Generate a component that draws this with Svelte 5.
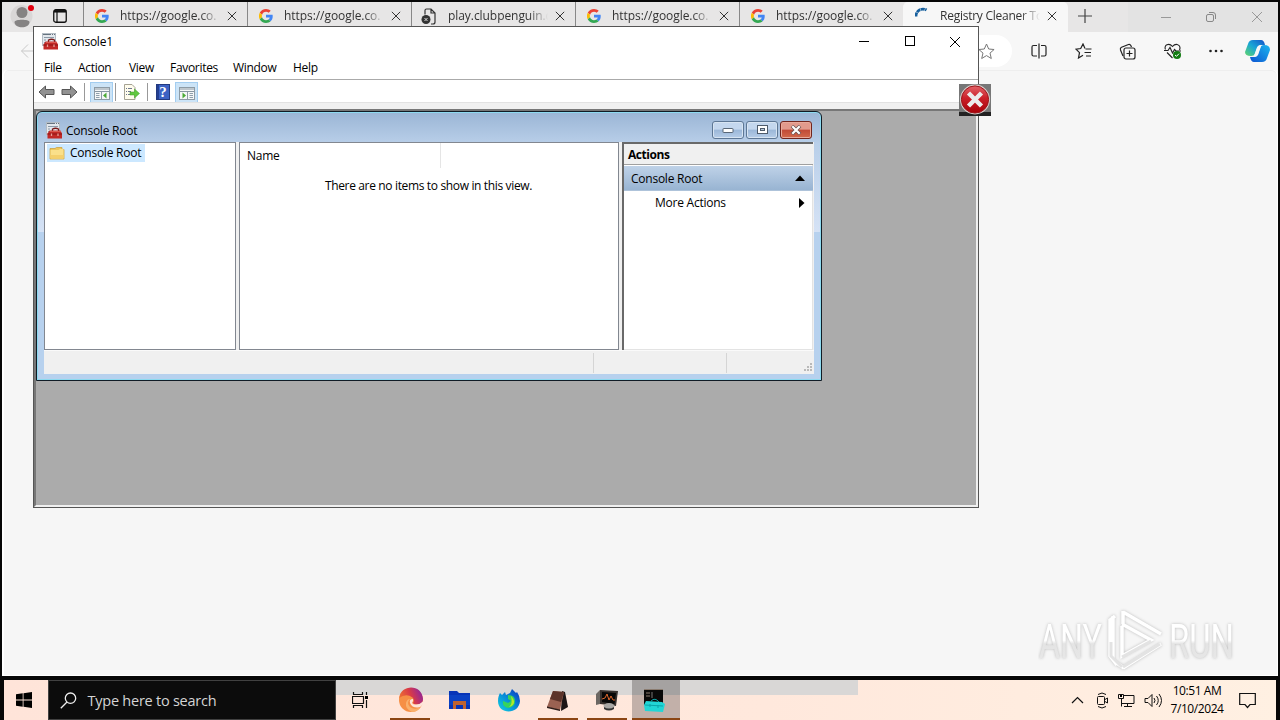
<script>
  const tabs = [
    { kind: 'google', label: 'https://google.co.' },
    { kind: 'google', label: 'https://google.co.' },
    { kind: 'page', label: 'play.clubpenguin.c' },
    { kind: 'google', label: 'https://google.co.' },
    { kind: 'google', label: 'https://google.co.' },
    { kind: 'loading', label: 'Registry Cleaner To' },
  ];
  const menus = [['File', 34], ['Action', 51], ['View', 41], ['Favorites', 63], ['Window', 60], ['Help', 40]];
  const dots = [[6, 0], [3, 3], [6, 3], [0, 6], [3, 6], [6, 6]];
</script>

{#snippet google()}
  <svg width="14" height="14" viewBox="0 0 48 48">
    <path fill="#ea4335" d="M24 9.5c3.5 0 6.700 1.200 9.200 3.600l6.900-6.900C35.900 2.400 30.500 0 24 0 14.600 0 6.500 5.400 2.600 13.200l8 6.200C12.400 13.700 17.700 9.500 24 9.500z" />
    <path fill="#4285f4" d="M47 24.600c0-1.600-.2-3.100-.4-4.600H24v9h12.900c-.6 3-2.200 5.500-4.700 7.200l7.700 6C44.400 38 47 31.800 47 24.600z" />
    <path fill="#fbbc05" d="M10.500 28.600A14 14 0 0 1 10.500 19.400l-8-6.200a24 24 0 0 0 0 21.600z" />
    <path fill="#34a853" d="M24 48c6.500 0 12-2.100 15.900-5.800l-7.700-6c-2.200 1.500-4.900 2.300-8.200 2.300-6.300 0-11.600-4.200-13.500-9.900l-8 6.200C6.500 42.600 14.600 48 24 48z" />
  </svg>
{/snippet}

{#snippet toolbox()}
  <svg width="17" height="17" viewBox="0 0 17 17">
    <rect x=".5" y=".5" width="13" height="12" fill="#e3e8ed" stroke="#b3bcc4" />
    <path d="M1 1.500h12" stroke="#66737f" stroke-dasharray="8 1 1 1" />
    <path d="M2 4.500h10M2 7h2M2 9.500h1" stroke="#8a9aa8" />
    <path d="M6.500 9V7q3-1.500 6 0v2" fill="none" stroke="#7c1b1b" stroke-width="1.300" />
    <path d="M3.500 8.500h11l1.500 3V16.500H1.500v-5z" fill="#c22927" />
    <path d="M1.500 12h14.500" stroke="#8c1515" />
    <path d="M4 9.500h11" stroke="#dc5850" />
    <path d="M5.500 11.500v2.500M12 11.500v2.500" stroke="#e89c94" stroke-width="1.300" />
  </svg>
{/snippet}

{#snippet cross(size, color, w = 1)}
  <svg width={size} height={size} viewBox="0 0 12 12"><path d="M1 1l10 10M11 1L1 11" fill="none" stroke={color} stroke-width={w} /></svg>
{/snippet}

{#snippet panelIcon(flip)}
  <svg width="16" height="13" viewBox="0 0 16 13" class:flip>
    <rect x=".5" y=".5" width="15" height="12" fill="#f5f7f8" stroke="#8d9ba6" />
    <path d="M1 2h14M1 4.500h14" stroke="#8796a2" />
    <path d="M7.500 5v7.500" stroke="#8d9ba6" />
    <path d="M2 6.500h3.500M2 8.500h3.500M2 10.500h3.500" stroke="#8f9fac" />
    <path d="M12.500 5.500v6L9 8.500z" fill="#4aaa35" />
  </svg>
{/snippet}

<div class="screen">
  <header class="strip">
    <div class="profile">
      <svg width="32" height="29" viewBox="0 0 32 29">
        <circle cx="19.500" cy="14" r="11" fill="#d9d7d7" />
        <circle cx="20" cy="10.500" r="5.500" fill="#858383" />
        <path d="M12.500 20c0-3 15-3 15 0 0 7-15 7-15 0z" fill="#858383" />
        <circle cx="29" cy="6" r="3" fill="#e3000f" />
      </svg>
    </div>
    <div class="tabmenu">
      <svg width="14" height="14" viewBox="0 0 14 14"><rect x=".75" y=".75" width="12.500" height="12.500" rx="2" fill="none" stroke="#111" stroke-width="1.300" /><path d="M1 2.300h12" stroke="#111" stroke-width="2.500" /><path d="M4 3v10" stroke="#111" stroke-width="1.200" /></svg>
    </div>
    {#each tabs as tab}
      <div class="tab" class:active={tab.kind === 'loading'}>
        <span class="favicon">
          {#if tab.kind === 'google'}{@render google()}
          {:else if tab.kind === 'page'}
            <svg class="pageicon" width="16" height="17" viewBox="0 0 16 17"><path d="M4 6.500V2.500q0-1.500 1.500-1.500h4.500l4 4v9q0 2-2 2H10M10 1v4h4" fill="none" stroke="#333" stroke-width="1.200" /><circle cx="5" cy="11.500" r="4.500" fill="#333" /><path d="M3.500 10l3 3m0-3l-3 3" stroke="#ddd" /></svg>
          {:else}
            <svg width="16" height="16" viewBox="0 0 16 16"><path d="M1 9.500A7 7 0 0 1 11.500 3" fill="none" stroke="#17609e" stroke-width="2.800" stroke-dasharray="4 .5" /></svg>
          {/if}
        </span>
        <span class="label">{tab.label}</span>
        <span class="x">{@render cross(10, '#333', 1.2)}</span>
      </div>
    {/each}
    <div class="newtab"><svg width="14" height="14" viewBox="0 0 14 14"><path d="M7 0v14M0 7h14" stroke="#444" stroke-width="1.200" /></svg></div>
    <div class="caption">
      <svg width="10" height="10" viewBox="0 0 10 10"><path d="M0 5.500h10" stroke="#999" /></svg>
      <svg width="10" height="10" viewBox="0 0 10 10"><rect x=".5" y="2.500" width="7" height="7" rx="1.500" fill="none" stroke="#888" /><path d="M3 .5h4q2.500 0 2.500 2.500v4" fill="none" stroke="#888" /></svg>
      {@render cross(12, '#999', 1)}
    </div>
  </header>

  <div class="addressbar">
    <svg class="back" width="16" height="16" viewBox="0 0 16 16"><path d="M15 8H1.500M8 1.500L1.500 8 8 14.500" fill="none" stroke="#c9c9c9" /></svg>
    <div class="address"><svg width="17" height="17" viewBox="0 0 17 17"><path d="M8.500 1l2.200 5 5.400.5-4.100 3.600 1.300 5.400-4.800-2.900-4.800 2.900L5 10.100.9 6.500 6.300 6z" fill="none" stroke="#777" /></svg></div>
    <div class="tools">
      <svg width="16" height="16" viewBox="0 0 16 16"><path d="M6 2.500H2.500q-1.500 0-1.500 1.500v7.500q0 1.500 1.500 1.500H6M8 .5v15M10 2.500h3.500q1.500 0 1.500 1.500v7.500q0 1.500-1.500 1.500H10" fill="none" stroke="#222" stroke-width="1.200" /></svg>
      <svg width="17" height="16" viewBox="0 0 17 16"><path d="M10 5.500L8 1 5.700 5.500 1 6.200l3.500 3.500L3.500 15 8 12.300M10.500 6h6M9.500 9.500h6.500M11 13h5" fill="none" stroke="#222" stroke-width="1.200" /></svg>
      <svg width="17" height="17" viewBox="0 0 17 17"><path d="M4 13L1.500 7q-.6-2 1-2.700L9.500 1.500q1.500-.6 2.300 1L12.500 4" fill="none" stroke="#222" stroke-width="1.200" /><rect x="5" y="5" width="11" height="11" rx="2" fill="none" stroke="#222" stroke-width="1.200" /><path d="M10.500 7.500v6M7.500 10.500h6" stroke="#222" stroke-width="1.200" /></svg>
      <svg width="18" height="17" viewBox="0 0 18 17"><path d="M1.500 6.500C-.5 2 5-.5 8.500 3.500 12-.5 17.500 2 15.500 7M0 7.500h4l2-3 2.500 5.500 2-3.500 1.500 1.500h5M3 9.500l5.500 5.500" fill="none" stroke="#222" stroke-width="1.100" /><circle cx="13" cy="12" r="4" fill="#137c13" /><path d="M11 12l1.500 1.300 2.500-2.600" fill="none" stroke="#fff" /></svg>
      <svg width="14" height="16" viewBox="0 0 14 16"><g fill="#222"><circle cx="1.500" cy="8" r="1.300" /><circle cx="7" cy="8" r="1.300" /><circle cx="12.500" cy="8" r="1.300" /></g></svg>
    </div>
    <svg class="copilot" width="25" height="24" viewBox="0 0 25 24">
      <defs>
        <linearGradient id="cpa" x1="0" y1="1" x2="1" y2="0"><stop offset="0" stop-color="#62d66b" /><stop offset=".5" stop-color="#18a5d6" /><stop offset="1" stop-color="#1652c9" /></linearGradient>
        <linearGradient id="cpb" x1="0" y1="1" x2="1" y2="0"><stop offset="0" stop-color="#0d54d1" /><stop offset="1" stop-color="#1cb6ef" /></linearGradient>
      </defs>
      <path d="M8 1h8q3 0 4 5h-4q-3 0-4 3l-2 6q-1 2-4 2-6 0-6-4L3 5q1-4 5-4z" fill="url(#cpa)" />
      <path d="M17 23H9q-3 0-4-5h4q3 0 4-3l2-6q1-3 4-3 6 0 6 5l-3 8q-1 4-5 4z" fill="url(#cpb)" />
      <path d="M12 8.500q1-2.500 4.500-2.500l-3.500 10q-1 2-4.500 2z" fill="#f7f7f7" />
    </svg>
  </div>
  <main class="page"></main>

  <svg class="watermark" width="212" height="64" viewBox="0 0 212 64">
    <defs><linearGradient id="wm" x1="0" y1="0" x2="0" y2="1"><stop offset="0" stop-color="#fff" /><stop offset=".48" stop-color="#fff" /><stop offset=".54" stop-color="#e4e4e4" /><stop offset="1" stop-color="#e9e9e9" /></linearGradient></defs>
    <g class="mark" font-family="Roboto, sans-serif" font-size="48" fill="url(#wm)">
      <text x="1" y="50" textLength="63" lengthAdjust="spacingAndGlyphs">ANY</text>
      <text x="131" y="50" textLength="65" lengthAdjust="spacingAndGlyphs">RUN</text>
    </g>
    <path class="mark" d="M75 8v43M84 18v30l29-16-29-16M85 4l38 22M85 60l38-24M77 54l9 6M85 3v13M77 8l-5 4v36l7 9" fill="none" stroke="#fff" stroke-width="3.500" />
    <path d="M84 49l29-16M85 59l37-23M73 34v14l11 11" fill="none" stroke="#e3e3e3" stroke-width="3" />
  </svg>

  <section class="console">
    <div class="titlebar">
      {@render toolbox()}<span class="title">Console1</span>
      <div class="winbtns">
        <svg width="12" height="12" viewBox="0 0 12 12"><path d="M1 5.500h10" stroke="#000" /></svg>
        <svg width="12" height="12" viewBox="0 0 12 12"><rect x="1.500" y=".5" width="9" height="9" fill="none" stroke="#000" /></svg>
        {@render cross(12, '#000', 1)}
      </div>
    </div>
    <nav>{#each menus as [m, w]}<span style="width:{w}px">{m}</span>{/each}</nav>
    <div class="toolbar">
      <svg class="arrow" width="17" height="14" viewBox="0 0 17 14"><path d="M1 7l6.500-6v3.500H16v5H7.500V13z" fill="#929292" stroke="#555" /></svg>
      <svg class="arrow flip" width="17" height="14" viewBox="0 0 17 14"><path d="M1 7l6.500-6v3.500H16v5H7.500V13z" fill="#929292" stroke="#555" /></svg>
      <i></i>
      <span class="pressed">{@render panelIcon(false)}</span>
      <i class="second"></i>
      <svg class="export" width="17" height="16" viewBox="0 0 17 16"><path d="M1.500.5H9l3 3v12H1.500z" fill="#fffced" stroke="#a5a293" /><path d="M3 4.500h1M5 4.500h4M3 7.500h1M5 7.500h3M3 10.500h1M5 10.500h3" stroke="#6e7890" /><path d="M7 8h4.500V5l5 4.500-5 4.500v-3H7z" fill="#62c840" stroke="#3c9f25" stroke-width=".5" /></svg>
      <i class="third"></i>
      <span class="help">?</span>
      <span class="pressed">{@render panelIcon(true)}</span>
    </div>
    <div class="gap"></div>
    <div class="mdi">
      <div class="child">
        <div class="childtitle">
          {@render toolbox()}<span class="title">Console Root</span>
          <div class="aerobtns">
            <span><svg width="12" height="8" viewBox="0 0 12 8"><rect x="1" y="2.500" width="10" height="4" rx=".5" fill="#fff" stroke="#596777" /></svg></span>
            <span><svg width="11" height="10" viewBox="0 0 11 10"><rect x=".5" y=".5" width="10" height="8" fill="#fff" stroke="#4e5b6b" /><rect x="3.500" y="3.500" width="4" height="2" fill="#b9c9db" stroke="#4e5b6b" /></svg></span>
            <span class="close"><svg width="12" height="10" viewBox="0 0 12 10"><path d="M2 1l8 8M10 1L2 9" stroke="#65504f" stroke-width="3.600" /><path d="M2.300 1.300l7.400 7.400M9.700 1.300L2.300 8.700" stroke="#fff" stroke-width="2.200" /></svg></span>
          </div>
        </div>
        <div class="body">
          <div class="tree"><div class="node">
            <svg width="16" height="14" viewBox="0 0 16 14"><path d="M1 2.500h5l1.500-1H13v2h2v9.500H1z" fill="#efc95c" stroke="#c99b37" stroke-width=".7" /><path d="M1.500 4h8L11 3h3.500v9.500h-13z" fill="#fae08a" /><path d="M1.500 9h13v3.500h-13z" fill="#f4d06d" /></svg>
            <span>Console Root</span>
          </div></div>
          <div class="list"><div class="cols"><span>Name</span></div><p>There are no items to show in this view.</p></div>
          <aside>
            <h2>Actions</h2>
            <div class="group"><span>Console Root</span><svg width="10" height="6" viewBox="0 0 10 6"><path d="M5 .5L10 6H0z" /></svg></div>
            <div class="more"><span>More Actions</span><svg width="6" height="10" viewBox="0 0 6 10"><path d="M0 0l5.500 5L0 10z" /></svg></div>
          </aside>
        </div>
        <footer><span></span><span></span><svg width="9" height="9" viewBox="0 0 9 9">{#each dots as [x, y]}<rect {x} {y} width="2" height="2" fill="#b9b9b9" />{/each}</svg></footer>
      </div>
    </div>
  </section>

  <svg class="error" width="32" height="32" viewBox="0 0 32 32">
    <defs><linearGradient id="err" x1="0" y1="0" x2="0" y2="1"><stop offset="0" stop-color="#e26368" /><stop offset=".45" stop-color="#cb2029" /><stop offset="1" stop-color="#a80008" /></linearGradient></defs>
    <path d="M0 0h32v28H0z" fill="#777" /><path d="M0 28h32v4H0z" fill="#222" />
    <circle cx="16" cy="15.500" r="15" fill="#d8cfcc" /><circle cx="16" cy="15.500" r="13.600" fill="url(#err)" stroke="#9b1419" />
    <path d="M9.500 9l13 13M22.500 9l-13 13" stroke="#ececec" stroke-width="4.500" />
  </svg>

  <div class="taskbar">
    <div class="start"><svg width="16" height="16" viewBox="0 0 16 16"><path d="M0 2.300L6.700 1.300v6.200H0zM7.500 1.200L16 0v7.500H7.500zM0 8.400h6.700v6.300L0 13.700zM7.500 8.400H16V16l-8.500-1.200z" /></svg></div>
    <div class="search"><svg width="17" height="17" viewBox="0 0 17 17"><circle cx="10.500" cy="6.200" r="5.200" fill="none" stroke="#eee" stroke-width="1.300" /><path d="M7 10L.8 16.200" stroke="#eee" stroke-width="1.300" /></svg><span>Type here to search</span></div>
    <div class="apps">
      <div class="app"><svg width="17" height="16" viewBox="0 0 17 16"><path d="M1.500 0v2.500h9V0M1.500 16v-2.500h9V16M.5 4.500h11v7H.5zM14.500 0v3M14.500 8v8" fill="none" stroke="#111" stroke-width="1.200" /><path d="M13 4h3v3h-3z" /></svg></div>
      <div class="app run">
        <svg width="26" height="26" viewBox="0 0 26 26"><defs><linearGradient id="edge" x1="0" y1=".6" x2="1" y2=".3"><stop offset="0" stop-color="#ef7430" /><stop offset=".5" stop-color="#d93a48" /><stop offset="1" stop-color="#8d249f" /></linearGradient></defs>
          <circle cx="13" cy="13" r="12" fill="#f68f45" /><path d="M1.200 11C3-3 24-3 25 12q0 5.500-6 5.500-3 0-4-1.500 2-3-.5-5.500Q8 6 1.200 11z" fill="url(#edge)" /><path d="M12 12q-4 4 0 8 4 3 10.500.5Q19 25 14 25 7 22 8 16q1-4 4-4z" fill="#f9b06c" /><path d="M15 12q-4 0-3 4 2 5 8 4.500 3-.5 5-3v-3q-3 3-7 3-3 0-4-1.500 1.500-1.500 1-4z" fill="#fee5da" /></svg></div>
      <div class="app"><svg width="22" height="20" viewBox="0 0 22 20"><path d="M0 1h8l2 2h11v16H0z" fill="#0634b8" /><path d="M0 5h21v10H0z" fill="#0a41c4" /><path d="M4 11h13v8h-3v-4H7v4H4z" fill="#bf6331" /></svg></div>
      <div class="app"><svg width="24" height="24" viewBox="0 0 24 24"><defs><linearGradient id="fox" x1="0" y1="1" x2="1" y2="0"><stop offset="0" stop-color="#13d5e0" /><stop offset=".5" stop-color="#088bd7" /><stop offset="1" stop-color="#0732bd" /></linearGradient></defs><path d="M3 5l2 2 3-3 1 3 4-2 2-4 4 4 1-1q3 4 3 9c-1 14-22 14-22 0 0-4 1-6 2-8z" fill="url(#fox)" /><path d="M11 7q7 0 7 6t-7 7q-6-1-5-7l5 2 3-2-3-2z" fill="#36d35d" /><path d="M14 8q7 8-2 11 4-3 2-11z" fill="#b4e929" /></svg></div>
      <div class="app run"><svg width="24" height="23" viewBox="0 0 24 23"><path d="M17 2l3 1 3 15-7 4z" fill="#1e1717" /><path d="M8 2l11 1-4 18-13-3z" fill="#9a6252" /><path d="M8 2l11 1-3 10-11-3z" fill="#5c342a" /><path d="M2 17.500l13 3V22L2 19z" fill="#2c1c18" /></svg></div>
      <div class="app run"><svg width="24" height="22" viewBox="0 0 24 22"><path d="M1 5l4-4v14l-4 1z" fill="#6c6763" /><path d="M5 1l18 1-2 15-16-2z" fill="#38322f" /><path d="M7 3l14 1-1.500 11L7 13z" fill="#080808" /><path d="M7 10l3-1 2-4 2 6 2-4 2 4h2" fill="none" stroke="#e1682d" /><ellipse cx="14" cy="17" rx="5.500" ry="3" fill="#aaa8a5" /><path d="M9 18q5 3 10 0v2q-5 3-10 0z" fill="#333" /></svg></div>
      <div class="app run selected"><svg width="23" height="24" viewBox="0 0 23 24"><path d="M1 1h19v16H1z" fill="#090909" /><path d="M1 1.500h19" stroke="#8b7c70" /><path d="M3 5h4M3 8h4" stroke="#8b7c70" /><path d="M9 4v6" stroke="#777" /><path d="M3 13l16 1 3 2-2 8-18-1-1-6z" fill="#21d6d6" /><path d="M8 13q4-4 8 1M2 17l18 1M7 16v3M15 17v3" fill="none" stroke="#0ba5aa" /></svg></div>
    </div>
    <div class="tray">
      <svg width="13" height="8" viewBox="0 0 13 8"><path d="M1 7l5.500-5.500L12 7" fill="none" stroke="#111" stroke-width="1.200" /></svg>
      <svg class="meet" width="13" height="17" viewBox="0 0 13 17"><path d="M2 2.500q4-3 8 0M2 14.500q4 3 8 0" fill="none" stroke="#111" /><rect x="1.500" y="4.500" width="7" height="8" rx="1" fill="none" stroke="#111" /><path d="M9 7.500l2.500-1.500v5L9 9.500" fill="none" stroke="#111" /></svg>
      <svg width="17" height="15" viewBox="0 0 17 15"><path d="M5 2.500h11v8H3.500V6M9.500 10.500v3M6 13.500h8M.5 1.500h5v4h-5zM3.500 5.500v8" fill="none" stroke="#111" /><path d="M2 2h2v2H2z" /></svg>
      <svg width="18" height="15" viewBox="0 0 18 15"><path d="M1 5.500h3l4-4v12l-4-4H1zM10 5q2 2.500 0 5M12.500 3q3.500 4.500 0 9M15 1q5 6.500 0 13" fill="none" stroke="#111" /></svg>
      <div class="clock"><span>10:51 AM</span><span>7/10/2024</span></div>
      <svg width="17" height="17" viewBox="0 0 17 17"><path d="M.7 1.500h15.600v11H11l-2.500 3-2.500-3H.7z" fill="none" stroke="#111" stroke-width="1.200" /></svg>
    </div>
  </div>
</div>

<style>
  :global(body) { margin: 0; overflow: hidden; }
  .screen { position: relative; box-sizing: border-box; width: 1280px; height: 720px; background: #070707; padding-top: 2px; overflow: hidden; font-family: "Open Sans", "Noto Sans", sans-serif; font-size: 12px; letter-spacing: -.24px; color: #000; display: flex; flex-direction: column; }
  .screen * { box-sizing: border-box; }
  svg { display: block; flex: none; }
  .flip { transform: scaleX(-1); }
  .strip { height: 30px; margin: 0 2px; display: flex; background: #e7e6e6; flex: none; }
  .profile { width: 40px; }
  .tabmenu { width: 41px; padding: 7px 0 0 11px; }
  .tab { width: 164px; display: flex; align-items: flex-start; border-left: 1px solid #888; padding: 0 0 0 11px; color: #333; }
  .favicon { width: 25px; padding-top: 7px; }
  .pageicon { margin-left: -2px; margin-top: -1px; }
  .label { width: 101px; line-height: 28px; white-space: nowrap; letter-spacing: -.06px; -webkit-mask-image: linear-gradient(90deg, #000 80%, transparent 99%); mask-image: linear-gradient(90deg, #000 80%, transparent 99%); }
  .x { padding: 9px 0 0 6px; }
  .tab.active { width: 165px; background: #f7f7f7; border-color: #f7f7f7; border-radius: 5px 5px 0 0; }
  .active .favicon { padding-top: 5px; }
  .active .label { letter-spacing: -.25px; }
  .newtab { width: 60px; padding: 7px 0 0 10px; }
  .caption { flex: 1; display: flex; justify-content: flex-end; align-items: center; gap: 35px; padding-right: 15px; background: #e3e3e3; }
  .addressbar { height: 38px; flex: none; margin: 0 2px; background: #f7f7f7; display: flex; align-items: center; box-shadow: 0 8px #f7f7f7; }
  .back { margin-left: 18px; }
  .address { width: 975px; margin-left: 1px; height: 32px; border-radius: 16px; background: #fff; display: flex; align-items: center; justify-content: flex-end; padding-right: 17px; }
  .tools { display: flex; align-items: center; width: 192px; margin-left: 19px; justify-content: space-between; }
  .copilot { margin-left: 22px; }
  .page { position: relative; height: 606px; margin: 0 2px 4px; flex: none; background: #f6f6f6; border: solid #fff; border-width: 0 1px 1px 2px; box-shadow: inset 0 1px #eee; border-radius: 6px 6px 0 0; }
  .watermark { position: absolute; left: 1038px; top: 608px; letter-spacing: 0; }
  .mark { filter: drop-shadow(0 0 1.500px #bbb); }
  .console { position: absolute; left: 33px; top: 26px; width: 946px; height: 482px; border: 1px solid #555; background: #fff; display: flex; flex-direction: column; }
  .titlebar { height: 29px; display: flex; align-items: center; padding-left: 8px; flex: none; }
  .title { margin-left: 4px; }
  .winbtns { display: flex; gap: 33.500px; margin-left: auto; padding-right: 17px; }
  nav { height: 24px; flex: none; display: flex; align-items: center; padding-left: 10px; border-bottom: 1px solid #aaa; letter-spacing: -.3px; }
  nav span { white-space: nowrap; }
  .toolbar { height: 22px; flex: none; display: flex; align-items: center; padding: 2px 0 0 4px; }
  .arrow { margin-right: 6px; }
  .toolbar i { width: 1px; height: 18px; background: #999; margin: 0 5px 0 0; }
  .toolbar .second { margin: 0 7px 0 2px; }
  .toolbar .third { margin: 0 7px 0 7px; }
  .pressed { width: 23px; height: 21px; background: #cce4f7; border: 1px solid #a3cdf0; display: grid; place-items: center; padding-top: 2px; }
  .help { width: 14px; height: 16px; margin: 0 5px 0 1px; background: linear-gradient(90deg, #233f91 2px, #3c62c4 2px); border: 1px solid #233a80; color: #fff; font: bold 15px/14px "Liberation Serif", serif; text-align: center; }
  .gap { height: 7px; flex: none; background: #f0f0f0; border-top: 1px solid #e2e2e2; }
  .mdi { flex: 1; background: #ababab; border: 2px solid #696969; border-color: #777 #f0f0f0 #f0f0f0 #777; }
  .child { width: 786px; height: 270px; border: 1px solid #101c26; border-radius: 6px 6px 0 0; background: linear-gradient(#9ab5d5, #b9cfe9 32px, #d5e2f5 120px, #b7d1ee 120px); box-shadow: inset 0 0 0 1px #8ddaf0; display: flex; flex-direction: column; padding: 1px 7px 6px; }
  .childtitle { height: 29px; flex: none; display: flex; align-items: center; padding: 6px 2px 0 2px; }
  .childtitle .title { margin-left: 3px; }
  .aerobtns { margin-left: auto; display: flex; gap: 2px; }
  .aerobtns span { width: 32px; height: 18px; margin-top: -2px; border: 1px solid #5d7795; border-radius: 3px; display: grid; place-items: center; background: linear-gradient(#c4d7ee 45%, #9bb7d8 50%, #b6cde8); box-shadow: inset 0 0 0 1px #d7e4f2; }
  .aerobtns .close { border-color: #71251d; background: linear-gradient(#e29a8c 45%, #c14a36 50%, #d36a4c); box-shadow: inset 0 0 0 1px #e8aa9b; }
  .body { height: 208px; flex: none; background: #f0f0f0; display: flex; gap: 3px; }
  .tree { width: 192px; background: #fff; border: 1px solid #828790; padding: 1px 2px; }
  .node { width: 98px; height: 18px; background: #cce8ff; display: flex; align-items: center; gap: 5px; padding-left: 2px; white-space: nowrap; }
  .node span { line-height: 16px; padding-bottom: 1px; }
  .list { width: 380px; border: 1px solid #828790; background: #fff; }
  .cols { height: 25px; padding-left: 7px; line-height: 26px; width: 201px; border-right: 1px solid #e5e5e5; }
  .list p { margin: 9px 0 0; text-align: center; line-height: 18px; letter-spacing: -.35px; padding-right: 1px; }
  aside { width: 191px; border: solid #696969; border-width: 2px 0 0 2px; background: #fff; box-shadow: inset -1px -1px #e3e3e3; }
  h2 { margin: 0; height: 21px; background: #f0f0f0; border-bottom: 1px solid #a0a0a0; font-size: 12px; line-height: 22px; padding-left: 4px; letter-spacing: -.45px; }
  .group { height: 25px; margin-top: 1px; background: linear-gradient(#bfd2e8, #98b4d2); display: flex; align-items: center; justify-content: space-between; padding: 0 8px 0 7px; border-bottom: 1px solid #aec3da; }
  .more { height: 23px; display: flex; align-items: center; justify-content: space-between; padding: 0 8px 0 31px; }
  footer { flex: 1; background: #f0f0f0; display: flex; align-items: center; border-top: 1px solid #fafafa; }
  footer span { width: 550px; height: 20px; border-right: 1px solid #d5d5d5; }
  footer span + span { width: 133px; }
  footer svg { margin: 9px 1px 0 auto; }
  .error { position: absolute; left: 959px; top: 84px; }
  .taskbar { height: 40px; flex: none; margin: 0 4px; display: flex; background: linear-gradient(90deg, #ffe4d9, #ffe8dc 60%, #fff0e2); }
  .start { width: 44px; display: grid; place-items: center; padding-right: 4px; }
  .search { width: 288px; background: #0c0c0c; border: 1px solid #414141; color: #d5d5d5; font-size: 14.500px; letter-spacing: -.24px; display: flex; align-items: center; gap: 10.500px; padding-left: 11px; }
  .apps { display: flex; width: 522px; background: linear-gradient(#d9d7d6 15px, transparent 15px); }
  .app { width: 49.200px; height: 40px; display: grid; place-items: center; position: relative; }
  .app:nth-child(3), .app:nth-child(4) { padding-left: 2px; }
  .run::after { content: ""; position: absolute; left: 5px; right: 4px; bottom: 0; height: 2px; background: #8b4513; }
  .run:nth-child(2) { padding-left: 2px; }
  .selected { width: 48px; margin-left: 1px; background: linear-gradient(#a5a2a1 15px, #c2b0a9 15px); }
  .selected svg { margin-right: 3px; }
  .selected::after { left: 0; right: 0; }
  .tray { margin-left: auto; display: flex; align-items: center; gap: 9px; padding-right: 20px; }
  .meet { margin-left: 3px; }
  .clock { display: flex; flex-direction: column; line-height: 18px; letter-spacing: -.42px; width: 52px; white-space: nowrap; align-items: center; }
  .tray .clock + svg { margin-left: 7px; }
</style>
